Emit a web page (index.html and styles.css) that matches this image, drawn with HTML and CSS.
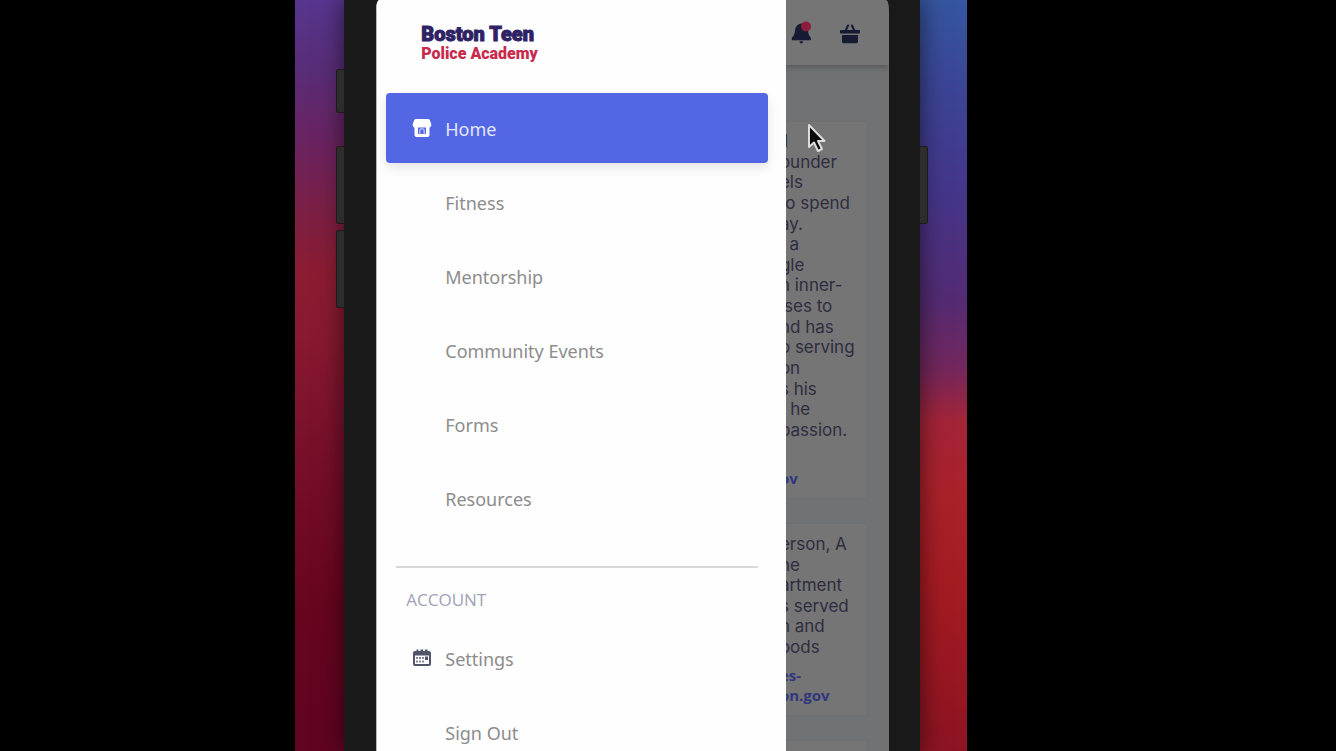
FILE: index.html
```html
<!DOCTYPE html>
<html lang="en">
<head>
<meta charset="utf-8">
<meta name="viewport" content="width=device-width, initial-scale=1">
<title>Boston Teen Police Academy</title>
<link rel="stylesheet" href="styles.css">
</head>
<body>
<div class="stage">
  <div class="phone">
    <span class="side-key key-mute"></span>
    <span class="side-key key-up"></span>
    <span class="side-key key-down"></span>
    <span class="side-key key-power"></span>
    <div class="screen">
      <div class="page">
        <header class="topbar">
          <button class="icon-button" type="button" aria-label="Notifications">
            <svg width="24" height="26" viewBox="0 0 24 26"><path fill="#171a33" d="M11 3.500c3.500-.5 6.500 3 7 7 .3 3.500 1 5.200 2.900 7.200v2.600H1.800v-2.600c2-1.700 2.900-3.700 3.200-7C5.400 6.500 7.500 4 11 3.500zM9.500 21.300h3.500c-.2 1.500-.8 2.200-1.700 2.200s-1.600-.7-1.800-2.200z"/><circle cx="16" cy="6.500" r="5" fill="#8c1d3c"/></svg>
          </button>
          <button class="icon-button" type="button" aria-label="Basket">
            <svg width="24" height="26" viewBox="0 0 24 26"><path fill="none" stroke="#171a33" stroke-width="2" stroke-linecap="round" d="M6.500 11l2.500-5.500M15.500 11l-2.500-5.500"/><path fill="#171a33" d="M2 10h18c.6 0 1 .4 1 1v1.500c0 .6-.4 1-1 1H2c-.6 0-1-.4-1-1V11c0-.6.4-1 1-1zM3 15h16v6.500c0 1-.8 1.800-1.800 1.800H4.800c-1 0-1.800-.8-1.800-1.800z"/></svg>
          </button>
        </header>
        <main class="feed">
          <article class="card card-first">
            <div class="lines lines-long">
              <span>il</span><span>ounder</span><span>els</span><span>to spend</span><span>ay.</span><span>&nbsp;&nbsp;a</span><span>gle</span><span>n inner-</span><span>ises to</span><span>nd has</span><span>o serving</span><span>on</span><span>s his</span><span>t he</span><span>passion.</span>
            </div>
            <a class="mail" href="#">ov</a>
          </article>
          <article class="card card-second">
            <div class="lines lines-short">
              <span>erson, A</span><span>he</span><span>artment</span><span>s served</span><span>n and</span><span>oods</span>
            </div>
            <a class="mail" href="#">es-<br>on.gov</a>
          </article>
          <article class="card card-third"></article>
        </main>
      </div>
      <aside class="drawer">
        <div class="logo"><span class="logo-top">Boston Teen</span><span class="logo-bottom">Police Academy</span></div>
        <nav class="menu" aria-label="Main">
          <a class="item item-active" href="#" aria-current="page">
            <svg class="item-icon" width="20" height="20" viewBox="0 0 20 20"><path fill="#fff" d="M4 1h12c.9 0 1.500.4 1.800 1.200l1.400 3.600c.4 1.600-.1 2.900-1.400 3.600H2.200C.9 8.700.4 7.400.8 5.800l1.400-3.600C2.500 1.400 3.100 1 4 1z"/><path fill="#fff" d="M2.500 9H6v7h8V9h3.500v8c0 1.100-.9 2-2 2h-11c-1.100 0-2-.9-2-2z"/><path fill="#fff" fill-opacity=".55" d="M7 16v-3c0-1.700 1.300-3 3-3s3 1.300 3 3v3h-1.500v-3c0-.8-.7-1.500-1.500-1.500s-1.500.7-1.500 1.500v3z"/></svg>
            <span class="label">Home</span>
          </a>
          <a class="item" href="#"><span class="label">Fitness</span></a>
          <a class="item" href="#"><span class="label">Mentorship</span></a>
          <a class="item" href="#"><span class="label">Community Events</span></a>
          <a class="item" href="#"><span class="label">Forms</span></a>
          <a class="item" href="#"><span class="label">Resources</span></a>
        </nav>
        <hr class="divider">
        <h2 class="heading">ACCOUNT</h2>
        <nav class="menu" aria-label="Account">
          <a class="item" href="#">
            <svg class="item-icon" width="20" height="20" viewBox="0 0 20 20"><path fill="#50546b" fill-rule="evenodd" d="M3 3h1.500V1.500h2V3h2V1.500h2.500V3h2V1.500h2.500V3H17c1.100 0 2 .9 2 2v11c0 1.100-.9 2-2 2H3c-1.100 0-2-.9-2-2V5c0-1.100.9-2 2-2zM3 7.500V16h14V7.500z"/><path fill="#85899b" d="M4 9h2v2H4zM7 9h2v2H7zM10 9h2v2h-2zM4 12.500h2v2H4zM7 12.500h2v2H7zM10 12.500h2v2h-2z"/><path fill="#50546b" d="M13 8.500h3V12h-3z"/></svg>
            <span class="label">Settings</span>
          </a>
          <a class="item" href="#"><span class="label">Sign Out</span></a>
        </nav>
      </aside>
      <svg class="cursor" width="20" height="32" viewBox="0 0 20 32"><path fill="#0b0b0b" stroke="#dcdcdc" stroke-width="2" stroke-linejoin="round" d="M2 3v22l5-4.500 4 8.500 4-2-4-8h6.500z"/></svg>
    </div>
  </div>
</div>
</body>
</html>
```
FILE: styles.css
```css
* {
  box-sizing: border-box;
}

body {
  margin: 0;
  background: #000;
  font-family: "Noto Sans", "Open Sans", sans-serif;
}

button {
  padding: 0;
  border: 0;
  background: none;
}

a {
  text-decoration: none;
}

.stage {
  width: 50.25%;
  height: 100vh;
  margin-left: 22.1%;
  padding: 0 47px 0 49px;
  overflow: hidden;
  background:
    linear-gradient(#57368f 0%, #582d78 9%, #6a2360 19%, #7b1f45 28%, #8b1c31 36%, #871930 45%, #770f29 61%, #68051f 80%, #600420 100%) left / 50% 100% no-repeat,
    linear-gradient(#3556a0 0%, #3c4495 12%, #44368a 25%, #542b73 40%, #73275d 49%, #a32438 56%, #ab2129 66%, #a51b22 78%, #8c1422 100%) right / 50% 100% no-repeat;
}

.phone {
  position: relative;
  height: 100%;
  padding: 0 31px 0 32px;
  background: #191919;
  box-shadow: 0 0 22px 2px rgba(0, 0, 0, 0.5);
}

.side-key {
  position: absolute;
  width: 8px;
  left: -8px;
  background: #2e2d2d;
  border: 1px solid #1f1b1d;
  border-right: 0;
  border-radius: 3px 0 0 3px;
}

.key-mute {
  top: 69px;
  height: 44px;
}

.key-up {
  top: 146px;
  height: 78px;
}

.key-down {
  top: 230px;
  height: 78px;
}

.key-power {
  left: auto;
  right: -8px;
  top: 146px;
  height: 78px;
  border: 1px solid #1f1b1d;
  border-left: 0;
  border-radius: 0 3px 3px 0;
}

.screen {
  position: relative;
  height: 100%;
  overflow: hidden;
  border-radius: 3px 3px 0 0 / 12px 12px 0 0;
  background: #717274;
}

.page {
  font-family: Inter, "Liberation Sans", sans-serif;
  color: #2e2d40;
}

.topbar {
  display: flex;
  justify-content: flex-end;
  align-items: center;
  gap: 25px;
  height: 65px;
  padding-right: 26px;
  background: #757575;
  box-shadow: 0 2px 6px rgba(0, 0, 0, 0.25);
}

.icon-button,
.icon-button svg {
  display: block;
}

.feed {
  display: flex;
  flex-direction: column;
  gap: 26px;
  padding: 57px 22px 0 12px;
}

.card {
  padding-left: calc(80% + 9px);
  border-radius: 3px;
  background: #757575;
  box-shadow: 0 0 3px rgba(60, 60, 70, 0.08);
  white-space: nowrap;
}

.card-first {
  height: 376px;
  padding-top: 9px;
}

.card-second {
  height: 191px;
  padding-top: 10px;
}

.card-third {
  height: 191px;
}

.lines {
  display: flex;
  flex-direction: column;
  justify-content: space-between;
  font-size: 17px;
  line-height: 20px;
}

.lines-long {
  height: 309px;
}

.lines-short {
  height: 123px;
}

.mail {
  display: block;
  font-family: "Open Sans", sans-serif;
  font-size: 15px;
  font-weight: 700;
  line-height: 20px;
  color: #30387c;
}

.card-first .mail {
  margin-top: 28px;
}

.card-second .mail {
  margin-top: 8px;
}

.drawer {
  position: absolute;
  inset: 0 auto 0 0;
  width: 80%;
  overflow: hidden;
  padding: 24px 18px 0 9px;
  border-left: 1px solid #b5b5b5;
  background: #fefefe;
}

.logo {
  display: flex;
  flex-direction: column;
  height: 69px;
  padding-left: 35px;
  font-family: Roboto, "Liberation Sans", sans-serif;
  font-weight: 900;
}

.logo-top {
  font-size: 20px;
  line-height: 21px;
  color: #2f2264;
  -webkit-text-stroke: 1px #2f2264;
}

.logo-bottom {
  font-size: 16px;
  line-height: 17px;
  color: #c92a4c;
}

.menu {
  display: flex;
  flex-direction: column;
  gap: 4px;
}

.item {
  display: grid;
  grid-template-columns: 20px 1fr;
  column-gap: 13px;
  align-items: center;
  flex-shrink: 0;
  height: 70px;
  padding-left: 26px;
  border-radius: 4px;
  font-size: 18px;
  line-height: 26px;
  color: #8c8c8c;
}

.label {
  grid-column: 2;
  padding-top: 1px;
}

.item-active {
  background: #5366e3;
  box-shadow: 0 5px 12px rgba(0, 0, 0, 0.1);
  color: #e3e7ff;
}

.divider {
  height: 2px;
  margin: 33px 10px 0;
  border: 0;
  background: #d9d9d9;
}

.heading {
  margin: 20px 0 11px 20px;
  font-family: "Open Sans", sans-serif;
  font-size: 17px;
  font-weight: 400;
  line-height: 24px;
  color: #a0a1b8;
}

.cursor {
  position: absolute;
  left: 84%;
  top: 122px;
}
```
